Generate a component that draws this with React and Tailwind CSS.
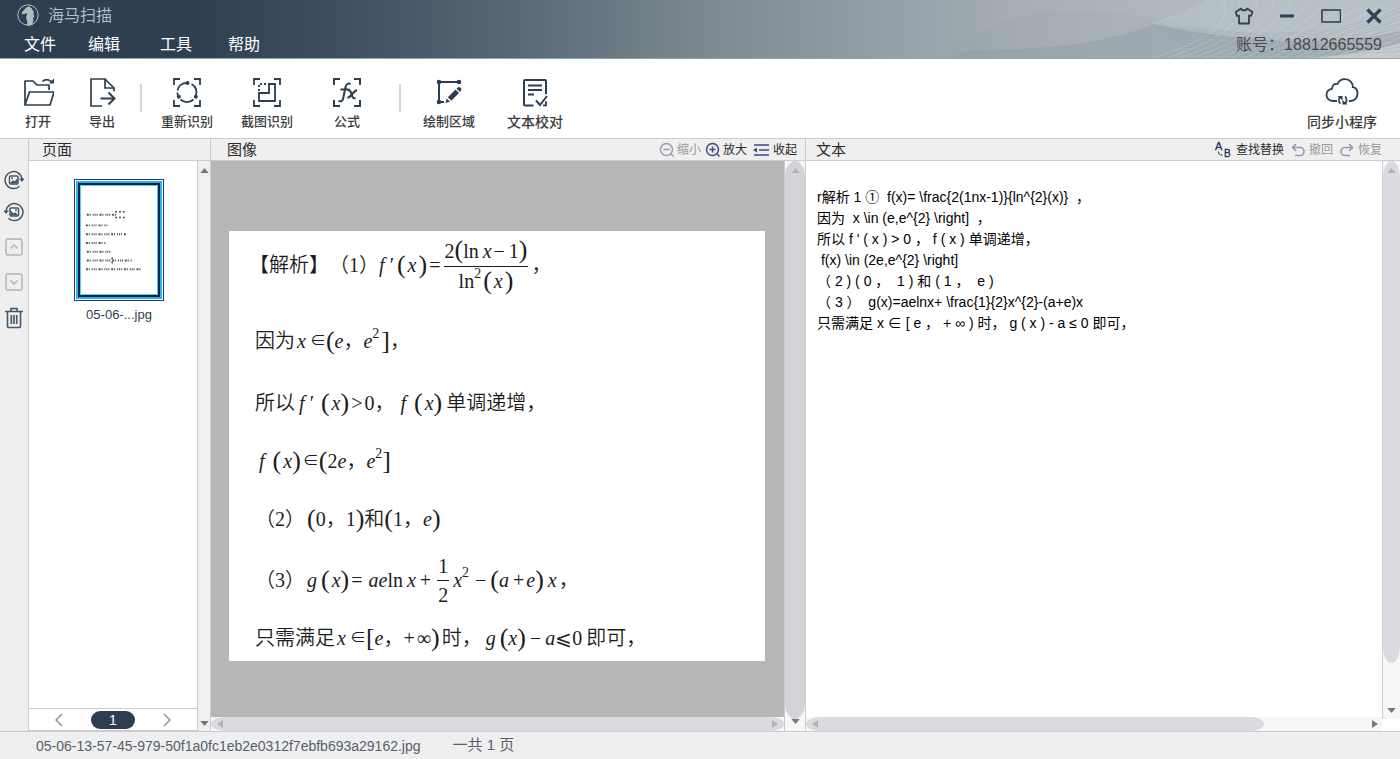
import { clsx } from 'clsx'

const BRACKETS = 'M3 8V2h6M23 2h6v6M29 23v6h-6M9 29H3v-6'

const OpenIcon = () => (
  <svg viewBox="0 0 32 32" className="h-8 w-8" fill="none" stroke="#2d3e50" strokeWidth="1.7" strokeLinejoin="round">
    <path d="M3 28V4h8l4 4h12v5" />
    <path d="M3 28l4.500-13H32l-4 13z" />
    <path d="M20.500 4.500c2.500-2.500 6-2.500 9.500.500" />
    <path d="M32 1.500V6.500h-5z" fill="#2d3e50" stroke="none" />
  </svg>
)

const ExportIcon = () => (
  <svg viewBox="0 0 32 32" className="h-8 w-8" fill="none" stroke="#2d3e50" strokeWidth="1.700">
    <path d="M16 29H5V2h14l9 9v3.500" />
    <path d="M19 2v9h9" />
    <path d="M14.500 21.500h13M22.500 15.500l6 6-6 6" strokeWidth="2" />
  </svg>
)

const RedoScanIcon = () => (
  <svg viewBox="0 0 32 32" className="h-8 w-8" fill="none" stroke="#2d3e50" strokeWidth="1.800">
    <path d={BRACKETS} />
    <path d="M6.500 13.500A9.500 9.500 0 0 1 15 5.800M20.500 7a9.500 9.500 0 0 1 4.500 11.500M22.500 22.500a9.500 9.500 0 0 1-13 0M6.800 18.500a9.500 9.500 0 0 1-.300-3" />
    <g fill="#2d3e50" stroke="none">
      <circle cx="16.500" cy="6" r="2" />
      <circle cx="24.800" cy="19.800" r="2" />
      <circle cx="7.800" cy="19.800" r="2" />
    </g>
  </svg>
)

const CropScanIcon = () => (
  <svg viewBox="0 0 32 32" className="h-8 w-8" fill="none" stroke="#2d3e50" strokeWidth="1.800">
    <path d={BRACKETS} />
    <path d="M18 7h6v17H8v-8h10z" />
    <path d="M8 14V7h10" strokeDasharray="2 2" />
  </svg>
)

const FormulaIcon = () => (
  <svg viewBox="0 0 32 32" className="h-8 w-8" fill="none" stroke="#2d3e50" strokeWidth="2">
    <path d={BRACKETS} />
    <path d="M7.500 24c3 1 4.500-.500 5-4l2-10c.600-3 2.500-4 5-3M9.500 12.500h9" />
    <path d="M16.500 13.500c2.500-1 3 .500 4 3.500s1.500 5 4 4M26 13c-3.500 1-6 7-9.500 8" />
  </svg>
)

const RegionIcon = () => (
  <svg viewBox="0 0 32 32" className="h-8 w-8" fill="none" stroke="#2d3e50" strokeWidth="2">
    <path d="M6 25V5H26M6 25H11" />
    <g fill="#2d3e50" stroke="none">
      <circle cx="6" cy="5" r="2.300" />
      <circle cx="26" cy="5" r="2.300" />
      <circle cx="6" cy="25" r="2.300" />
      <path d="M12.500 26l1.200-4.500 3.300 3.300zM14.800 20.300l7.700-7.700 3.500 3.500-7.700 7.700zM23.500 11.500l1.800-1.300c1.500-.700 3.700 1.300 3 2.900l-1.300 1.900z" />
    </g>
  </svg>
)

const ProofIcon = () => (
  <svg viewBox="0 0 32 32" className="h-8 w-8" fill="none" stroke="#2d3e50" strokeWidth="1.800">
    <path d="M27 17V4q0-1-1-1H6Q5 3 5 4v23.500q0 1 1 1h8.500" strokeWidth="2" />
    <path d="M9 8.500h14M9 13h14M9 17.500h6" />
    <path d="M17 23.500l4 4.500L28 19" strokeWidth="2" />
    <path d="M24 28.300h3v-4" />
  </svg>
)

const CloudIcon = () => (
  <svg viewBox="0 0 34 32" className="h-8 w-[34px]" fill="none" stroke="#2d3e50" strokeWidth="1.800">
    <path d="M12 24H8.500C4.500 24 1.500 21.500 1.500 18s2.500-5.800 5.500-6.200C7 8.500 9.500 6.200 12.500 7 14 3.700 17 2.200 20 2.200c4.800 0 8 3.500 7.800 8 2.800.500 4.700 3 4.700 6.300 0 4.500-3 7.500-7 7.500H24" />
    <path d="M15 20c-1.500 2-1.500 5 .500 6.500M20 19.500c2 1.500 2 5 .500 7" />
    <path d="M12.500 19h5v4.500zM22.500 27.500h-5V23z" fill="#2d3e50" stroke="none" />
  </svg>
)

const RotateIcon = ({ flip }) => (
  <svg viewBox="0 0 20 20" className={clsx('h-5 w-5', flip && '-scale-x-100')} fill="none" stroke="#44586a" strokeWidth="1.500">
    <path d="M18 9A8.500 8.500 0 1 0 15.500 16.200" />
    <path d="M15 8.500h5.500L18 12z" fill="#44586a" stroke="none" />
    <rect x="5.500" y="6" width="8.500" height="8" rx="1" fill="#fff" />
    <path d="M6 13l3-3 1.500 1.500L13.500 8v5.500H6z" fill="#44586a" stroke="none" />
    <circle cx="8" cy="8.300" r="1" fill="#44586a" stroke="none" />
  </svg>
)

const BoxChevron = ({ down }) => (
  <svg viewBox="0 0 20 20" className={clsx('h-5 w-5', down && 'rotate-180')} fill="none" stroke="#b4b4b4" strokeWidth="1.500">
    <rect x="2" y="2" width="16" height="16" rx="2" />
    <path d="M6.500 11.500L10 8l3.500 3.500" />
  </svg>
)

const TrashIcon = () => (
  <svg viewBox="0 0 20 24" className="h-6 w-5" fill="none" stroke="#44586a" strokeWidth="1.600">
    <path d="M1 4.500h18M7 4.500V1.500h6v3M3.500 4.500v15q0 1 1 1h11q1 0 1-1v-15" />
    <path d="M7.300 8v9M10 8v9M12.700 8v9" />
  </svg>
)

const ZoomIcon = ({ plus, color }) => (
  <svg viewBox="0 0 16 16" className="h-4 w-4" fill="none" stroke={color} strokeWidth="1.500">
    <circle cx="7.500" cy="7.500" r="6" />
    <path d={plus ? 'M4.500 7.500h6M7.500 4.500v6' : 'M4.500 7.500h6'} />
    <path d="M11.800 11.800L14.500 14.500" />
  </svg>
)

const CollapseIcon = () => (
  <svg viewBox="0 0 16 16" className="h-4 w-4" fill="none" stroke="#44448c" strokeWidth="1.500">
    <path d="M1 3h15M6 8h10M1 13h15" />
    <path d="M0 8l4-2.500v5z" fill="#44448c" stroke="none" />
  </svg>
)

const UndoIcon = ({ flip }) => (
  <svg viewBox="0 0 14 14" className={clsx('h-3.5 w-3.5', flip && '-scale-x-100')} fill="none" stroke="#9696b0" strokeWidth="1.600">
    <path d="M5 1L1.500 4.500 5 8M1.500 4.500H9a4 4 0 0 1 0 8H4" />
  </svg>
)

const ReplaceIcon = () => (
  <svg viewBox="0 0 16 18" className="h-[18px] w-4 overflow-visible" fill="#2a2a5c">
    <text x="0" y="9" fontSize="11" fontFamily="Liberation Sans, sans-serif" stroke="#2a2a5c" strokeWidth=".3">A</text>
    <text x="9" y="16" fontSize="10" fontFamily="Liberation Sans, sans-serif" stroke="#2a2a5c" strokeWidth=".3">B</text>
    <path d="M3.500 10.500c0 2.500 1 3.500 4 3.500" fill="none" stroke="#2a2a5c" />
  </svg>
)

const SeahorseLogo = () => (
  <svg viewBox="0 0 22 22" className="h-[22px] w-[22px]" fill="none" stroke="#b3bcc5">
    <circle cx="11" cy="11" r="10.200" />
    <path
      d="M4.500 8.500l3.500-3.500c.500-1.200 1.500-1.800 3-2L12 1.500l1 2 1.800.500.500 2 1.700 1.500-.700 2.200 1 2.500-1.300 2.300.500 2.500-1 1.500.500 2c-2 1-5.500 1.300-7 .500 1.500-.700 1.700-2.500 1-4.500-1-2-1.300-3.500-.300-5.500l.600-2L8 9.800 5.500 10.500z"
      fill="#b3bcc5"
      stroke="none"
    />
  </svg>
)

// one vertical or horizontal arrow head of a scroll bar
const Arrow = ({ dir, dim }) => {
  const points = {
    up: '0,6 5,0 10,6',
    down: '0,0 5,6 10,0',
    left: '6,0 0,4 6,8',
    right: '0,0 6,4 0,8',
  }
  const vertical = dir === 'up' || dir === 'down'
  return (
    <svg
      viewBox={vertical ? '0 0 10 6' : '0 0 6 8'}
      className={vertical ? 'h-[5px] w-[9px] shrink-0' : 'h-2 w-[6px] shrink-0'}
      fill={dim ? '#b3b3b8' : '#777'}
    >
      <polygon points={points[dir]} />
    </svg>
  )
}

const HeaderWaves = () => (
  <svg viewBox="0 0 700 59" preserveAspectRatio="none" className="absolute inset-y-0 right-0 h-full w-1/2" fill="none">
    <path d="M240 59C290 14 350 6 420 14S560 40 700 50V59z" fill="#8b9aa6" opacity=".12" />
    <path d="M270 51C400 51 450 30 505 0H700V59H250z" fill="#8092a0" opacity=".26" />
    <path d="M450 24C550 44 620 48 700 32V0H505C490 9 470 18 450 24z" fill="#dfe5e8" opacity=".3" />
    <path d="M610 59C650 56 680 50 700 44V59z" fill="#d5dade" opacity=".6" />
    {Array.from({ length: 26 }, (_, i) => (
      <path
        key={i}
        d={`M${450 + i * 10} ${60 + i}C${500 + i * 10} ${44 + i} ${540 + i * 10} ${24 + i} ${520 + i * 18} ${i - 4}`}
        stroke="#e4eaed"
        strokeWidth=".8"
        opacity=".3"
      />
    ))}
    {Array.from({ length: 12 }, (_, i) => (
      <path
        key={i}
        d={`M${450 + i * 4} ${24 + i * 3}C${530 + i * 6} ${34 + i * 2} 620 ${46 + i} 700 ${8 + i * 4}`}
        stroke="#7c8c99"
        strokeWidth=".6"
        opacity=".25"
      />
    ))}
  </svg>
)

const menus = [
  { name: '文件', space: 'ml-6' },
  { name: '编辑', space: 'ml-8' },
  { name: '工具', space: 'ml-10' },
  { name: '帮助', space: 'ml-9' },
]

const Header = () => (
  <header className="relative h-[59px] shrink-0 border-b border-[#98a0a8] bg-[linear-gradient(90deg,#2d3e50_0%,#2f4052_14%,#3b4b5b_22%,#556675_36%,#7b8890_50%,#929da6_62%,#a6afb5_73%,#b0b9be_84%,#b6bec3_100%)]">
    <HeaderWaves />
    <div className="relative flex h-[30px] items-center pl-[17px] pr-[18px]">
      <SeahorseLogo />
      <h1 className="ml-[9px] pt-0.5 text-base text-[#b3bcc5]">海马扫描</h1>
      <div className="ml-auto flex items-center gap-[25px] pt-0.5">
        <button type="button" aria-label="换肤">
          <svg viewBox="0 0 20 18" className="h-[18px] w-5" fill="none" stroke="#2d4358" strokeWidth="1.800" strokeLinejoin="round">
            <path d="M6 1.500c.500 2.500 5.500 2.500 6 0l5.500 3.500-1.500 4-2-.500V16.500H4V8.500L2 9 .800 5z" />
          </svg>
        </button>
        <button type="button" aria-label="最小化">
          <svg viewBox="0 0 16 18" className="h-[18px] w-4" stroke="#2d4358" strokeWidth="3">
            <path d="M0 9h14" />
          </svg>
        </button>
        <button type="button" aria-label="最大化">
          <svg viewBox="0 0 20 18" className="h-[18px] w-5" fill="none" stroke="#2d4358" strokeWidth="1.600">
            <rect x="1" y="3" width="18.500" height="12" />
          </svg>
        </button>
        <button type="button" aria-label="关闭">
          <svg viewBox="0 0 16 18" className="h-[18px] w-4" stroke="#2d4358" strokeWidth="3.200">
            <path d="M1.500 2.500l13 13M14.500 2.500l-13 13" />
          </svg>
        </button>
      </div>
    </div>
    <nav className="relative flex h-7 items-center pt-0.5">
      {menus.map((menu) => (
        <button key={menu.name} type="button" className={clsx('text-base text-white', menu.space)}>{menu.name}</button>
      ))}
      <span className="ml-auto mr-[18px] text-base text-[#4a4a4a]">账号：18812665559</span>
    </nav>
  </header>
)

const Tool = ({ icon: Icon, label, className }) => (
  <button type="button" className={clsx('flex flex-col items-center font-medium text-[#3c3c3c]', className)}>
    <Icon />
    <span className="mt-[3px] leading-5 whitespace-nowrap">{label}</span>
  </button>
)

const Toolbar = () => (
  <div className="flex h-20 shrink-0 border-b border-[#ccc] bg-white pl-1.5 pt-[18px]">
    <Tool icon={OpenIcon} label="打开" className="w-16 text-[13px]" />
    <Tool icon={ExportIcon} label="导出" className="w-16 text-[13px]" />
    <div className="ml-1.5 mt-[7px] h-7 w-0.5 bg-[#d5d5d5]" />
    <Tool icon={RedoScanIcon} label="重新识别" className="ml-[5px] w-20 text-[13px]" />
    <Tool icon={CropScanIcon} label="截图识别" className="w-20 text-[13px]" />
    <Tool icon={FormulaIcon} label="公式" className="w-20 text-[13px]" />
    <div className="ml-3 mt-[7px] h-7 w-0.5 bg-[#d5d5d5]" />
    <Tool icon={RegionIcon} label="绘制区域" className="ml-[5px] w-[86px] text-[13px]" />
    <Tool icon={ProofIcon} label="文本校对" className="w-[86px] text-sm" />
    <Tool icon={CloudIcon} label="同步小程序" className="ml-auto mr-[18px] w-20 text-sm" />
  </div>
)

const PanelHeader = ({ title, className, children }) => (
  <div className={clsx('flex h-[22px] shrink-0 items-center border-b border-[#ccc] bg-[#efefef]', className)}>
    <h2 className="text-[15px] leading-5 text-[#2b2b2b]">{title}</h2>
    {children}
  </div>
)

const SmallTool = ({ label, className, children }) => (
  <button type="button" className={clsx('flex items-center text-xs', className)}>
    {children}
    {label}
  </button>
)

const Rail = () => (
  <aside className="flex w-[29px] shrink-0 flex-col items-center gap-[15px] border-r border-[#ccc] bg-[#efefef] pt-[31px]">
    <div className="flex flex-col gap-3">
      <button type="button" aria-label="向右旋转"><RotateIcon /></button>
      <button type="button" aria-label="向左旋转"><RotateIcon flip /></button>
    </div>
    <button type="button" aria-label="上移"><BoxChevron /></button>
    <button type="button" aria-label="下移"><BoxChevron down /></button>
    <button type="button" aria-label="删除"><TrashIcon /></button>
  </aside>
)

const thumbLines = [
  [6, 29, 32], [5, 40, 22], [5, 49, 41], [5, 58, 20], [6, 67, 25], [6, 76, 46], [5, 85, 57],
]

const Thumbnail = () => (
  <figure className="ml-[45px] mt-[18px] flex flex-col items-center self-start">
    <div className="border border-[#1d3f75] bg-white p-px">
      <div className="border-2 border-[#27b4ea] bg-[#06204c] p-0.5">
        <svg viewBox="0 0 78 110" className="h-[110px] w-[78px] border border-[#5fcbee] bg-white">
          <g stroke="#222" strokeWidth="2" opacity=".8">
            {thumbLines.map(([x, y, w]) => (
              <path key={y} d={`M${x} ${y}h${w}`} strokeDasharray="2 1 1 2 1 1 1 1 1 2" />
            ))}
            <path d="M35 26h12M35 32h10M32 73v6" strokeWidth="1.500" strokeDasharray="2 2" />
          </g>
        </svg>
      </div>
    </div>
    <figcaption className="mt-1 text-[13px] leading-5 text-[#2d3e50]">05-06-...jpg</figcaption>
  </figure>
)

const PagesPanel = () => (
  <section className="flex w-[182px] shrink-0 flex-col border-r border-[#ccc]">
    <PanelHeader title="页面" className="pl-[13px]" />
    <div className="flex min-h-0 flex-1">
      <div className="flex flex-1 flex-col bg-white">
        <Thumbnail />
        <div className="mt-auto flex h-[23px] items-center justify-center gap-7 border-y border-[#ccc]">
          <button type="button" aria-label="上一页">
            <svg viewBox="0 0 8 14" className="h-3.5 w-2" fill="none" stroke="#888" strokeWidth="1.300"><path d="M7 1L1 7l6 6" /></svg>
          </button>
          <span className="h-[18px] w-11 rounded-full bg-[#2d3e50] text-center text-sm leading-[18px] text-white">1</span>
          <button type="button" aria-label="下一页">
            <svg viewBox="0 0 8 14" className="h-3.5 w-2" fill="none" stroke="#888" strokeWidth="1.300"><path d="M1 1l6 6-6 6" /></svg>
          </button>
        </div>
      </div>
      <div className="flex w-[13px] flex-col items-center justify-between border-l border-[#ccc] bg-[#f0f0f0] pb-[5px] pt-[7px]">
        <Arrow dir="up" />
        <Arrow dir="down" />
      </div>
    </div>
  </section>
)

const Row = ({ className, children }) => (
  <div className={clsx('flex h-10 items-center whitespace-pre', className)}>{children}</div>
)
const Zh = ({ className, children }) => <span className={clsx('font-[350]', className)}>{children}</span>
const V = ({ className, children }) => <i className={className}>{children}</i>
const P = ({ className, children }) => <span className={clsx('text-[26px]', className)}>{children}</span>
const In = ({ className }) => <span className={clsx('text-base', className)}>∈</span>
const Sup = ({ children }) => <sup className="top-0 mb-3.5 text-sm leading-none">{children}</sup>

const Paper = () => (
  <article className='h-[430px] w-[536px] bg-white pl-[26px] font-["Liberation_Serif","Noto_Sans_CJK_SC",serif] text-xl text-[#1c1c1c]'>
    <Row className="h-[68px]">
      <Zh className="-ml-1.5">【解析】</Zh><Zh>（1）</Zh>
      <V>f</V><V className="ml-1">′</V>
      <P className="ml-1">(</P><V className="ml-0.5">x</V><P className="ml-0.5">)</P>
      <span className="ml-0.5">=</span>
      <span className="ml-1 flex flex-col items-center">
        <span className="flex h-8 items-center border-b border-[#1c1c1c]">
          2<P>(</P>ln<V className="ml-1">x</V><span className="ml-0.5">−</span><span className="ml-1">1</span><P>)</P>
        </span>
        <span className="flex h-7 items-center">
          ln<Sup>2</Sup><P className="ml-0.5">(</P><V className="ml-0.5">x</V><P className="ml-0.5">)</P>
        </span>
      </span>
      <Zh className="ml-1">，</Zh>
    </Row>
    <Row className="mt-[22px]">
      <Zh>因为</Zh>
      <V className="ml-0.5">x</V><In className="ml-1" />
      <P>(</P><V>e</V><Zh>，</Zh><V>e</V><Sup>2</Sup><P className="ml-0.5">]</P><Zh>，</Zh>
    </Row>
    <Row className="mt-[22px]">
      <Zh>所以</Zh>
      <V className="ml-1">f</V><V className="ml-1">′</V>
      <P className="ml-2">(</P><V className="ml-0.5">x</V><P>)</P>
      <span className="ml-0.5">&gt;</span><span className="ml-0.5">0</span><Zh>，</Zh>
      <V className="ml-1.5">f</V><P className="ml-2">(</P><V className="ml-0.5">x</V><P>)</P>
      <Zh className="ml-1">单调递增，</Zh>
    </Row>
    <Row className="mt-[18px]">
      <V className="ml-1">f</V><P className="ml-2">(</P><V className="ml-0.5">x</V><P>)</P>
      <In className="ml-0.5" /><P>(</P>2<V>e</V><Zh>，</Zh><V>e</V><Sup>2</Sup><P>]</P>
    </Row>
    <Row className="mt-[18px]">
      <Zh>（2）</Zh>
      <P className="ml-0.5">(</P>0<Zh>，</Zh>1<P>)</P>
      <Zh>和</Zh>
      <P>(</P>1<Zh>，</Zh><V>e</V><P>)</P>
    </Row>
    <Row className="mt-[21px]">
      <Zh>（3）</Zh>
      <V className="ml-0.5">g</V><P className="ml-1">(</P><V className="ml-0.5">x</V><P>)</P>
      <span className="ml-0.5">=</span><V className="ml-1.5">ae</V>ln<V className="ml-1">x</V><span className="ml-1">+</span>
      <span className="ml-1.5 flex flex-col items-center leading-7">
        <span className="border-b border-[#1c1c1c] px-px">1</span>
        <span>2</span>
      </span>
      <V className="ml-1">x</V><Sup>2</Sup><span className="ml-1.5">−</span>
      <P className="ml-1">(</P><V>a</V><span className="ml-1">+</span><V className="ml-0.5">e</V><P>)</P><V className="ml-1">x</V><Zh className="ml-0.5">，</Zh>
    </Row>
    <Row className="mt-[18px]">
      <Zh>只需满足</Zh>
      <V className="ml-0.5">x</V><In className="ml-1" /><P>[</P><V>e</V><Zh>，</Zh>+<span className="ml-0.5">∞</span><P>)</P>
      <Zh className="ml-0.5">时，</Zh>
      <V className="ml-1">g</V><P className="ml-1">(</P><V>x</V><P>)</P>
      <span className="ml-1">−</span><V className="ml-1">a</V>⩽0
      <Zh className="ml-1">即可，</Zh>
    </Row>
  </article>
)

const ImagePanel = () => (
  <section className="flex min-w-0 grow basis-[595px] flex-col border-r border-[#ccc]">
    <PanelHeader title="图像" className="pl-4 pr-2">
      <div className="ml-auto flex items-center gap-1 pt-px">
        <SmallTool label="缩小" className="gap-0.5 text-[#999]"><ZoomIcon color="#9c9cb4" /></SmallTool>
        <SmallTool label="放大" className="gap-0.5 text-[#2b2b2b]"><ZoomIcon plus color="#44448c" /></SmallTool>
        <SmallTool label="收起" className="ml-0.5 gap-1 text-[#2b2b2b]"><CollapseIcon /></SmallTool>
      </div>
    </PanelHeader>
    <div className="flex min-h-0 flex-1">
      <div className="flex min-w-0 flex-1 flex-col">
        <div className="min-h-0 flex-1 overflow-hidden bg-[#b7b7b7] pl-[18px] pt-[70px]">
          <Paper />
        </div>
        <div className="h-3.5 shrink-0 bg-[#f7f7f7]">
          <div className="flex h-full items-center justify-between rounded-[14px_/_50%] bg-[#dadbe1] px-1.5">
            <Arrow dir="left" dim />
            <Arrow dir="right" dim />
          </div>
        </div>
      </div>
      <div className="flex w-[21px] flex-col items-center border-l border-[#ccc] bg-[#f7f7f7] pb-[7px]">
        <div className="flex w-full flex-1 flex-col items-center rounded-[50%_/_16px] bg-[#d3d4da] pt-[7px]">
          <Arrow dir="up" dim />
        </div>
        <Arrow dir="down" />
      </div>
    </div>
  </section>
)

const recognized = [
  'r解析 1 ①  f(x)= \\frac{2(1nx-1)}{ln^{2}(x)}  ，',
  '因为  x \\in (e,e^{2} \\right]  ，',
  "所以 f ' ( x ) > 0 ， f ( x ) 单调递增，",
  ' f(x) \\in (2e,e^{2} \\right]',
  '（ 2 ) ( 0 ，  1 ) 和 ( 1 ，  e )',
  '（ 3 ）  g(x)=aelnx+ \\frac{1}{2}x^{2}-(a+e)x',
  '只需满足 x ∈ [ e ， + ∞ ) 时， g ( x ) - a ≤ 0 即可，',
].join('\n')

const TextPanel = () => (
  <section className="flex min-w-0 grow basis-[594px] flex-col bg-white">
    <PanelHeader title="文本" className="pl-2.5 pr-[18px]">
      <div className="ml-auto flex items-center gap-[7px] pt-px">
        <SmallTool label="查找替换" className="gap-[5px] text-[#2b2b2b]"><ReplaceIcon /></SmallTool>
        <SmallTool label="撤回" className="gap-1 text-[#999]"><UndoIcon /></SmallTool>
        <SmallTool label="恢复" className="gap-1 text-[#999]"><UndoIcon flip /></SmallTool>
      </div>
    </PanelHeader>
    <div className="flex min-h-0 flex-1">
      <div className="flex min-w-0 flex-1 flex-col">
        <textarea
          aria-label="识别文本"
          spellCheck={false}
          defaultValue={recognized}
          className="min-h-0 w-full flex-1 resize-none overflow-hidden whitespace-pre bg-white pl-[11px] pt-[26px] text-sm leading-[21px] text-black outline-none"
        />
        <div className="flex h-3.5 shrink-0 items-center justify-between bg-[#f7f7f7] pr-1">
          <div className="flex h-full w-4/5 items-center rounded-[14px_/_50%] bg-[#dadbe1] pl-1.5">
            <Arrow dir="left" dim />
          </div>
          <Arrow dir="right" />
        </div>
      </div>
      <div className="mb-3 flex w-[18px] flex-col items-center justify-between border-l border-[#ccc] bg-[#f7f7f7] pb-1.5">
        <div className="flex h-[91%] w-full flex-col items-center rounded-[50%_/_16px] bg-[#dadbe1] pt-[7px]">
          <Arrow dir="up" dim />
        </div>
        <Arrow dir="down" />
      </div>
    </div>
  </section>
)

export default function App() {
  return (
    <div className='flex h-screen flex-col overflow-hidden bg-white font-["Liberation_Sans","Noto_Sans_CJK_SC",sans-serif]'>
      <Header />
      <Toolbar />
      <main className="flex min-h-0 flex-1">
        <Rail />
        <PagesPanel />
        <ImagePanel />
        <TextPanel />
      </main>
      <footer className="flex h-7 shrink-0 items-center gap-8 border-t border-[#ccc] bg-[#efefef] pl-9 text-[#55606b]">
        <span className="text-sm">05-06-13-57-45-979-50f1a0fc1eb2e0312f7ebfb693a29162.jpg</span>
        <span className="text-[15px]">一共 1 页</span>
      </footer>
    </div>
  )
}
